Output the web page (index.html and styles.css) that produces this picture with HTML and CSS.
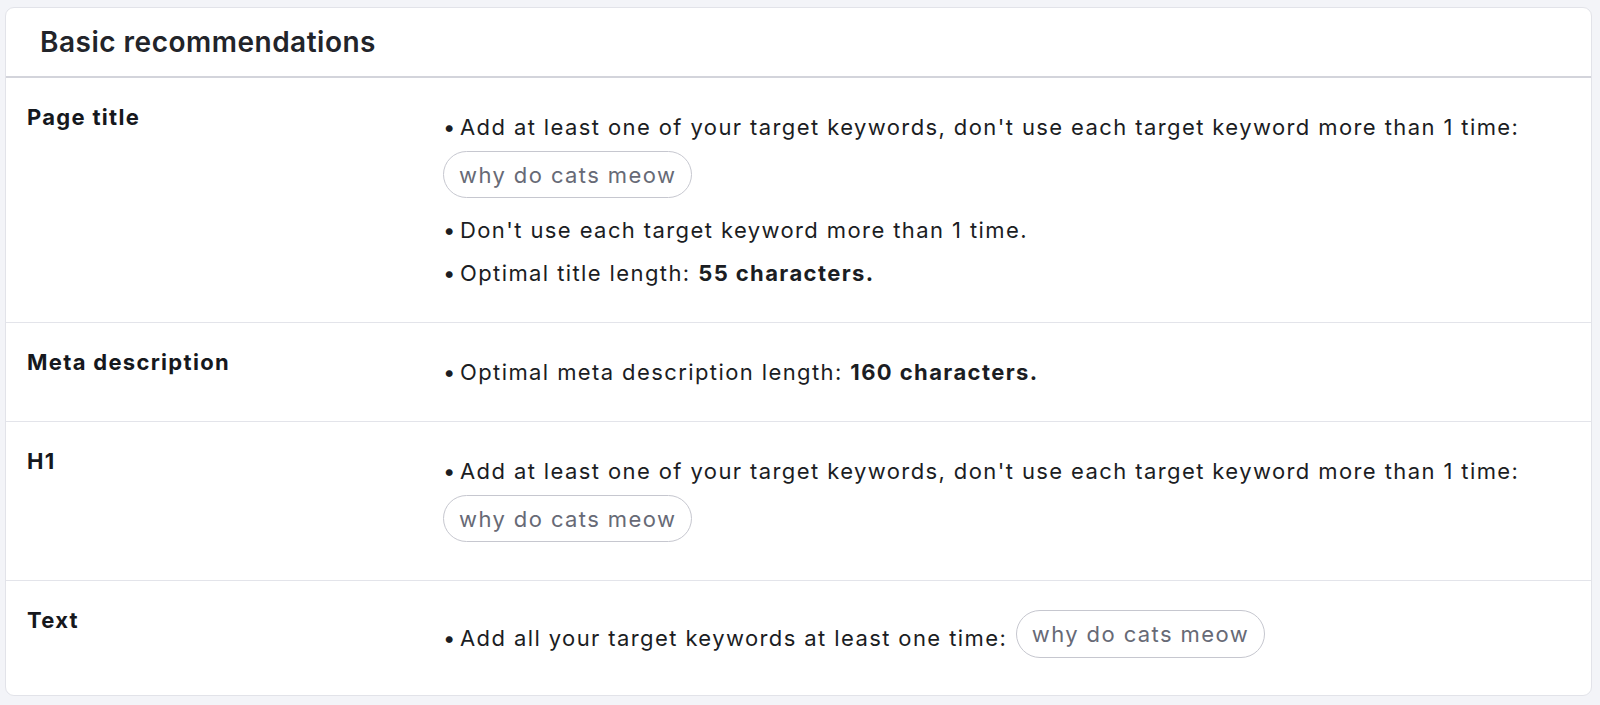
FILE: index.html
```html
<!DOCTYPE html>
<html>
<head>
<meta charset="utf-8">
<link rel="stylesheet" href="styles.css">
</head>
<body>
<div class="card">
  <div class="card-header">Basic recommendations</div>
  <div class="row">
    <div class="label">Page title</div>
    <ul class="recs">
      <li class="with-pill">Add at least one of your target keywords, don't use each target keyword more than 1 time:
        <div class="pills"><span class="pill">why do cats meow</span></div>
      </li>
      <li>Don't use each target keyword more than 1 time.</li>
      <li>Optimal title length: <b>55 characters.</b></li>
    </ul>
  </div>
  <div class="row">
    <div class="label">Meta description</div>
    <ul class="recs">
      <li>Optimal meta description length: <b>160 characters.</b></li>
    </ul>
  </div>
  <div class="row">
    <div class="label">H1</div>
    <ul class="recs">
      <li class="with-pill">Add at least one of your target keywords, don't use each target keyword more than 1 time:
        <div class="pills"><span class="pill">why do cats meow</span></div>
      </li>
    </ul>
  </div>
  <div class="row">
    <div class="label">Text</div>
    <ul class="recs">
      <li class="inline">Add all your target keywords at least one time: <span class="pill">why do cats meow</span></li>
    </ul>
  </div>
</div>
</body>
</html>
```
FILE: styles.css
```css
* { box-sizing: border-box; }
html, body { margin: 0; }
body {
  background: #f3f4f8;
  padding: 7px 8px 0 5px;
  font-family: Inter, "Noto Sans", sans-serif;
  color: #1b1d23;
}
.card {
  background: #fff;
  border: 1px solid #e2e3e9;
  border-radius: 9px;
  overflow: hidden;
}
.card-header {
  height: 70px;
  display: flex;
  align-items: center;
  padding-left: 34px;
  font-size: 28px;
  font-weight: 600;
  letter-spacing: 0.5px;
  color: #22242a;
  border-bottom: 2px solid #d3d4db;
}
.row {
  display: grid;
  grid-template-columns: 416px 1fr;
  padding: 23px 21px 23px 21px;
  border-bottom: 1px solid #e3e4ea;
}
.row:last-child { border-bottom: none; }
.label {
  font-size: 22px;
  line-height: 32px;
  font-weight: 700;
  letter-spacing: 1.3px;
  color: #16181d;
}
.recs {
  list-style: none;
  margin: 0;
  padding: 10px 0;
  font-size: 22px;
  line-height: 32px;
  letter-spacing: 1.4px;
}
.recs li { margin-bottom: 11px; }
.recs li:last-child { margin-bottom: 0; }
.recs li.with-pill:not(:last-child) { margin-bottom: 16px; }
.recs li::before {
  content: "•";
  display: inline-block;
  width: 17px;
  letter-spacing: 0;
}
.recs b { font-weight: 700; }
.pills { margin: 8px 0 5px; display: flex; }
.pill {
  display: inline-flex;
  align-items: center;
  height: 47px;
  padding: 0 15px;
  border: 1.5px solid #c6c7cf;
  border-radius: 24px;
  color: #676a76;
  font-size: 22px;
}
.recs li.inline {
  display: flex;
  align-items: center;
  white-space: pre;
}
.recs li.inline .pill { margin: -4px 0 4px 1px; height: 48px; }
```
